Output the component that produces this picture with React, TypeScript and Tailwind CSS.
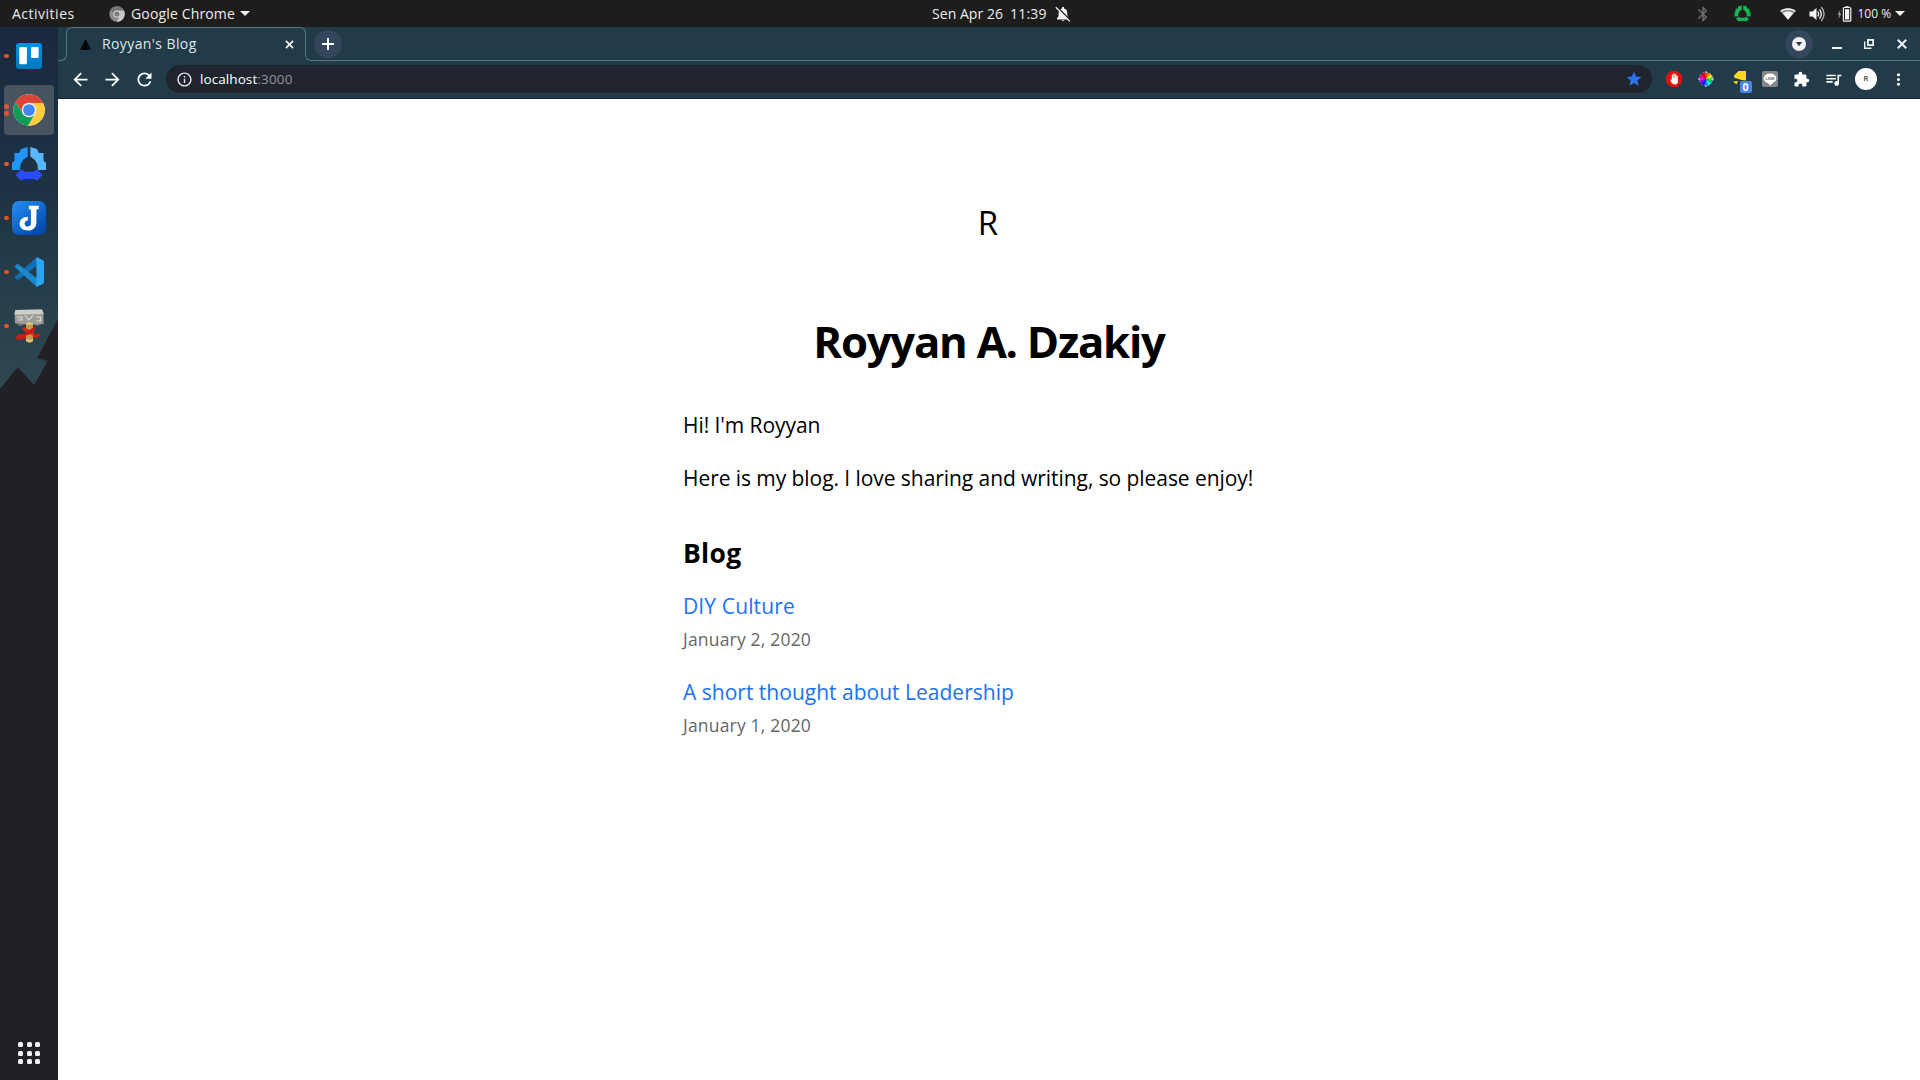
import React from "react";
import {
  MdArrowBack,
  MdArrowForward,
  MdBluetooth,
  MdExtension,
  MdInfoOutline,
  MdMoreVert,
  MdQueueMusic,
  MdRefresh,
  MdStar,
} from "react-icons/md";

function Caret() {
  return (
    <svg viewBox="0 0 10 5" className="h-[5px] w-[10px] shrink-0">
      <path d="M0 0h10L5 5z" fill="#f2f2f2" />
    </svg>
  );
}

function ChromeMono() {
  return (
    <svg viewBox="0 0 16 16" className="size-4 shrink-0">
      <circle cx="8" cy="8" r="7.7" fill="#8d8d8d" />
      <path d="M8 4.4h6.8A7.7 7.7 0 0 1 7.6 15.7L11.2 9.8A3.6 3.6 0 0 0 8 4.4z" fill="#c9c9c9" />
      <path d="M1.3 4.2A7.7 7.7 0 0 1 14.8 4.4H8A3.6 3.6 0 0 0 4.6 7z" fill="#767676" />
      <circle cx="8" cy="8" r="3.6" fill="#dedede" />
      <circle cx="8" cy="8" r="2.6" fill="#7c7c7c" />
    </svg>
  );
}

function TopBar() {
  return (
    <header className="flex h-[27px] shrink-0 items-center bg-[#1d1d1d] text-[14px] leading-[27px] text-[#ececec]">
      <div className="flex w-[932px] items-center pl-3">
        <span className="w-[97px] tracking-[0.5px]">Activities</span>
        <ChromeMono />
        <span className="ml-[6px] w-[109px] tracking-[0.15px]">Google Chrome</span>
        <Caret />
      </div>
      <div className="flex items-center">
        <span className="w-[78px] whitespace-nowrap tracking-[0.05px]">Sen Apr 26</span>
        <span className="w-[45px] tracking-[0.2px]">11:39</span>
        <svg viewBox="0 0 16 16" className="size-4">
          <path d="M2 13.500v-1.300c1.500-1 1.700-2.700 1.700-5C3.700 4.500 5 2.800 7 2.500V1.200q1-.8 2 0v1.300c2 .3 3.300 2 3.300 4.700 0 2.300.2 4 1.700 5v1.300z" fill="#f2f2f2" />
          <path d="M6.500 14.200h3q-1.500 2-3 0z" fill="#f2f2f2" />
          <path d="M1.600.4L15.600 14.600" stroke="#1d1d1d" strokeWidth="1.500" />
          <path d="M.8 1.200L14.800 15.400" stroke="#f2f2f2" strokeWidth="1.300" />
        </svg>
      </div>
      <div className="ml-auto flex items-center pr-[15px]">
        <MdBluetooth className="mr-[22px] size-[18px] text-[#6c6c6c]" />
        <svg viewBox="0 0 34 34" className="mr-[29px] size-[17px]">
          <path d="M15.500 1v8.500L11 13l-2.500 4.500V23H1v-7l2-3.500V8l4-1 2.500-5z M18.500 1v8.500L23 13l2.500 4.500V23H33v-7l-2-3.500V8l-4-1-2.500-5z M9.500 23.500l3 2h9l3-2 5.500 4-5 5.500-3-1h-10l-3 1-5-5.500z" fill="#12b455" />
        </svg>
        <svg viewBox="0 0 16 12" className="mr-[13px] h-3 w-4">
          <path d="M.2 3C4.500-.8 11.500-.8 15.800 3L8 11.800z" fill="#8c8c8c" />
          <path d="M.2 3C4.500-.8 11.500-.8 15.800 3l-.9 1C11 1 5 1 1.100 4z" fill="#f2f2f2" />
          <path d="M2.800 5.300C6 3 10 3 13.200 5.300L8 11.800z" fill="#f2f2f2" />
        </svg>
        <svg viewBox="0 0 17 16" className="mr-[11px] h-4 w-[17px]" fill="none" stroke="#f2f2f2" strokeWidth="1.300" strokeLinecap="round">
          <path d="M.5 5.500h3L7.500 2v12l-4-3.500h-3z" fill="#f2f2f2" stroke="none" />
          <path d="M9 6q1.500 2 0 4M10.800 3.800q3 4.200 0 8.400" />
          <path d="M12.600 1.500q5 6.500 0 13" stroke="#b5b5b5" />
        </svg>
        <svg viewBox="0 0 15 16" className="mr-[5.500px] h-4 w-[15px]">
          <path d="M3.500 3.500L.5 8.800h1.700L1.500 13l3-5.400H2.800z" fill="#9c9c9c" />
          <path d="M8.300 1V.2h3.400V1z" fill="#f2f2f2" />
          <rect x="6.400" y="1.500" width="7.400" height="13.700" rx="1" fill="none" stroke="#f2f2f2" strokeWidth="1.200" />
          <rect x="8" y="3.200" width="4.200" height="10.300" fill="#f2f2f2" />
        </svg>
        <span className="mr-[5.500px] w-[32px] whitespace-nowrap text-[12px]">100 %</span>
        <Caret />
      </div>
    </header>
  );
}

const dockIcons: { dots: number; active?: boolean; icon: React.ReactNode }[] = [
  {
    dots: 1,
    icon: (
      <svg viewBox="0 0 26 26" className="size-[26px]">
        <defs>
          <linearGradient id="trello" x2="0" y2="1">
            <stop stopColor="#0091e6" />
            <stop offset="1" stopColor="#0079bf" />
          </linearGradient>
        </defs>
        <rect width="26" height="26" rx="3" fill="url(#trello)" />
        <rect x="3.300" y="4" width="7.600" height="17.200" rx="1.200" fill="#fff" />
        <rect x="15" y="4" width="7.600" height="11" rx="1.200" fill="#fff" />
      </svg>
    ),
  },
  {
    dots: 2,
    active: true,
    icon: (
      <svg viewBox="0 0 48 48" className="size-8">
        <circle cx="24" cy="24" r="23.500" fill="#fff" />
        <path d="M24 13.500h21.200A23.600 23.600 0 0 0 3.600 12.200L14.900 29.200z" fill="#db4437" />
        <path d="M33.100 29.200L22.500 47.600A23.600 23.600 0 0 0 45.200 13.500H24z" fill="#ffcd40" />
        <path d="M14.900 29.200L3.600 12.200A23.600 23.600 0 0 0 22.500 47.600L33.100 29.200z" fill="#0f9d58" />
        <circle cx="24" cy="24" r="11" fill="#f1f1f1" />
        <circle cx="24" cy="24" r="8.800" fill="#4285f4" />
      </svg>
    ),
  },
  {
    dots: 1,
    icon: (
      <svg viewBox="0 0 34 34" className="size-[34px]">
        <path d="M15.700 0v9.500L11 13l-2.500 4.500L8 23H0v-7l2.500-2.500V6H7l2-4z" fill="#2196fb" />
        <path d="M18.300 0v9.500L23 13l2.500 4.500L26 23h8v-7l-2.500-2.500V6H27l-2-4z" fill="#58b7fb" />
        <path d="M9 22.300l4 2.500h8l4-2.500 5.500 5.800-5.500 5.700L22 32H12l-3 1.800-5.500-5.700z" fill="#2b4df5" />
      </svg>
    ),
  },
  {
    dots: 1,
    icon: (
      <svg viewBox="0 0 34 34" className="size-[34px]">
        <defs>
          <linearGradient id="joplin" x2=".7" y2="1">
            <stop stopColor="#2490f5" />
            <stop offset="1" stopColor="#0449ad" />
          </linearGradient>
        </defs>
        <rect width="34" height="34" rx="7" fill="url(#joplin)" />
        <path
          d="M16.800 4.700h10v3.600h-1.700q-.7 0-.7.900v12c0 5.200-3.300 8.300-8.300 8.300-5 0-8.500-2.500-8.500-6.700 0-4.100 3.300-7 8.200-7v3.600c-2 .2-3.200 1.300-3.200 3 0 1.900 1.200 3.200 3.200 3.200s3.100-1.300 3.100-3.600V9.200q0-.9-.8-.9h-1.300z"
          fill="#fff"
        />
      </svg>
    ),
  },
  {
    dots: 1,
    icon: (
      <svg viewBox="0 0 100 100" className="size-[30px]">
        <path d="M96 10L75.500 1 4 65c-2 2-2 4 0 6l5.500 5q2.500 2 5 0L96 14z" fill="#0f6fb3" />
        <path d="M96 90L75.500 99 4 35c-2-2-2-4 0-6l5.500-5q2.500-2 5 0L96 86z" fill="#1b87cd" />
        <path d="M75.500 99q-3 1-5.500-1.500c2 2 5 .6 5-2.300V4.800c0-2.900-3-4.300-5-2.300Q72.500 0 75.500 1L96 11q4 2 4 6v66q0 4-4 6z" fill="#2ba5f2" />
      </svg>
    ),
  },
  {
    dots: 1,
    icon: (
      <svg viewBox="0 0 30 34" className="h-[34px] w-[30px]">
        <path d="M1.500 1l26.500-.500 1.500 3V15l-6 1.500-4-1-4 1-6-1-3 1.500L1 14.500.500 4z" fill="#9b9b98" />
        <path d="M1.500 1l26.500-.500 1.500 4.500-29 .500z" fill="#cfcfca" />
        <path d="M3 8h5v3H4m7-5l4 5 4-5m3 2h4.500v4h-4" fill="none" stroke="#dededb" strokeWidth="1.100" />
        <path d="M1 14.500l7 1.500 7-1 8 1.500 6-1.500" fill="none" stroke="#555" strokeWidth="1" />
        <path d="M2 27q4-3 9-2l4-1 6 1 5-.500-.500 3.500-6 1-4-1-5 2-8.500 1q1.500-2 0-4z" fill="#c91d12" />
        <path d="M12 14.500q3.500-3 7 0v17q-3.500 4-7 0z" fill="#c4964f" />
        <path d="M12 14.500q3.500-3 7 0v1.500h-7zM12 29.500q3.500 2 7 0v2.500q-3.500 3-7 0z" fill="#e0bd78" />
        <path d="M8 19q3-1.500 6 1l5 3.500q2 1.500 0 3-4-.500-7-3.500-3-1.500-4-4z" fill="#dc2a1a" />
        <path d="M22 18q-2-1-5 2l-6 4q-1 1.500 0 2.500 4-.500 7-3 3-2 4-5.500z" fill="#c41a10" />
      </svg>
    ),
  },
];

function Dock() {
  return (
    <nav className="relative flex w-[58px] shrink-0 flex-col bg-[#221f26]">
      <svg viewBox="0 0 58 370" className="absolute left-0 top-0 h-[370px] w-[58px]">
        <defs>
          <linearGradient id="sky" x2="0" y2="1">
            <stop stopColor="#1a293e" />
            <stop offset=".45" stopColor="#1d3345" />
            <stop offset="1" stopColor="#2f4850" />
          </linearGradient>
        </defs>
        <path d="M0 0H58V292L52 303L37 331L47.700 334L34 358L17.700 340L0 362z" fill="url(#sky)" />
      </svg>
      <ul className="relative flex flex-col pt-[2px]">
        {dockIcons.map((item, i) => (
          <li key={i} className="flex h-[54px] items-center">
            <div
              className={
                "relative ml-1 flex size-[50px] items-center justify-center rounded-[4px] " +
                (item.active ? "bg-[#475460]" : "")
              }
            >
              {item.icon}
              <span className="absolute left-0 top-0 flex h-full flex-col justify-center gap-[2px]">
                <i className="block size-[4.600px] rounded-full bg-[#e95420]" />
                {item.dots === 2 && <i className="block size-[4.600px] rounded-full bg-[#e95420]" />}
              </span>
            </div>
          </li>
        ))}
      </ul>
      <div className="relative mb-[16px] ml-[18px] mt-auto grid w-[22px] grid-cols-3 gap-[3.500px]">
        {Array.from({ length: 9 }, (_, i) => (
          <i key={i} className="block size-[5px] rounded-[1.500px] bg-[#f2f2f2]" />
        ))}
      </div>
    </nav>
  );
}

function TabStrip() {
  return (
    <div className="flex h-[34px] shrink-0">
      <div className="h-[17px] w-[9px] self-end rounded-br-[6px] border-b border-r border-[#557885]" />
      <div className="relative flex w-[238px] items-center">
        <span className="absolute -left-px -right-px top-0 h-[17px] rounded-t-[6px] border-x border-t border-[#557885]" />
        <svg viewBox="0 0 12 11" className="ml-[13px] h-[11px] w-3">
          <defs>
            <linearGradient id="favicon">
              <stop offset=".55" stopColor="#050505" />
              <stop offset="1" stopColor="#050505" stopOpacity=".3" />
            </linearGradient>
          </defs>
          <path d="M5.500 0L12 11H0z" fill="url(#favicon)" />
        </svg>
        <span className="ml-[10px] text-[14px] leading-[34px] tracking-[0.400px] text-[#dfe5e8]">Royyan's Blog</span>
        <svg viewBox="0 0 10 10" className="ml-auto mr-[11px] size-[9px]">
          <path d="M1 1l8 8M9 1l-8 8" stroke="#f0f3f4" strokeWidth="1.900" />
        </svg>
      </div>
      <div className="relative flex flex-1 items-center">
        <span className="absolute bottom-0 left-0 right-0 h-[17px] rounded-bl-[6px] border-b border-l border-[#557885]" />
        <div className="relative ml-[9px] flex size-7 items-center justify-center rounded-full bg-[#34465c]">
          <svg viewBox="0 0 12 12" className="size-3">
            <path d="M6 0v12M0 6h12" stroke="#fff" strokeWidth="2" />
          </svg>
        </div>
        <div className="relative ml-auto flex items-center pr-[13px]">
          <div className="flex size-7 items-center justify-center rounded-full bg-[#34465c]">
            <svg viewBox="0 0 14 14" className="size-[14px]">
              <circle cx="7" cy="7" r="7" fill="#f2f4f5" />
              <path d="M3.800 5h6.400L7 9.300z" fill="#2c3e52" />
            </svg>
          </div>
          <span className="ml-[19px] mt-2 h-[2px] w-[10px] bg-[#eef1f2]" />
          <svg viewBox="0 0 10 10" className="ml-[22px] size-[10px]" fill="none" stroke="#eef1f2">
            <rect x="3.900" y=".9" width="5.200" height="5.200" strokeWidth="1.800" />
            <path d="M.7 2.500v6.800h6.800" strokeWidth="1.400" />
          </svg>
          <svg viewBox="0 0 10 10" className="ml-[23px] size-[10px]">
            <path d="M.8.8l8.400 8.400M9.200.8L.8 9.200" stroke="#eef1f2" strokeWidth="2" />
          </svg>
        </div>
      </div>
    </div>
  );
}

const wheel = ["#f33", "#f80", "#ff0", "#3f3", "#0c6", "#0ff", "#08f", "#11f", "#80f", "#f0f", "#f08", "#d00"];

function ColorWheel() {
  return (
    <svg viewBox="-8 -8 16 16" className="size-4">
      <circle r="6.800" fill="none" stroke="#b9bfc2" strokeWidth=".8" strokeDasharray="2 1.500" />
      {wheel.map((c, i) => (
        <path key={c} d="M0 0L-1.800-6.600H1.800z" fill={c} transform={`rotate(${i * 30})`} />
      ))}
      <path d="M0-8l1.500 1.500h-3zM0 8l1.500-1.500h-3zM-8 0l1.500 1.500v-3zM8 0L6.500 1.500v-3z" fill="#d5d9db" />
    </svg>
  );
}

function Toolbar() {
  return (
    <div className="flex h-[38px] shrink-0 items-center border-b border-[#14262f] pb-px pl-[11.500px] text-white">
      <MdArrowBack className="size-[21px]" />
      <MdArrowForward className="ml-[11px] size-[21px]" />
      <MdRefresh className="ml-[11px] size-[21px]" />
      <div className="ml-[11.500px] flex h-7 w-[1486px] items-center rounded-full bg-[#20252d] pl-[9.500px] pr-[9px]">
        <MdInfoOutline className="size-[17px] text-[#e8eaed]" />
        <span className="ml-[7.500px] text-[13.500px] leading-7 tracking-[0.080px]">
          localhost<span className="text-[#8f959b] tracking-[0.200px]">:3000</span>
        </span>
        <MdStar className="ml-auto size-[18px] text-[#2a73e8]" />
      </div>
      <div className="ml-[13.500px] flex items-center">
        <svg viewBox="0 0 16 16" className="size-4">
          <path d="M4.700 0h6.600L16 4.700v6.600L11.300 16H4.700L0 11.300V4.700z" fill="#e3110a" />
          <path
            d="M4 8.600l1.300-.2.500 1V3.800q.7-.8 1.200 0V7h.4V2.800q.7-.9 1.300 0V7h.4V3.400q.7-.8 1.300 0V7.400h.3V5q.7-.7 1.200 0v5q0 3.500-3 3.500-2.200 0-3.300-1.700z"
            fill="#fff"
          />
        </svg>
        <div className="ml-4">
          <ColorWheel />
        </div>
        <div className="relative ml-[19px] h-4 w-[13px]">
          <svg viewBox="0 0 13 14" className="block h-[14px] w-[13px]">
            <path d="M1 4.500L5.500 0H13v9.500L8.500 9 1 6.500z" fill="#fcd91c" />
            <path d="M0 10.500l5-.500-1.500 3.500z" fill="#fcd91c" />
          </svg>
          <span className="absolute left-[7px] top-[10px] flex h-3 w-3 items-center justify-center rounded-[2px] bg-[#4a85ee] text-[10.500px] font-bold leading-3 text-white">
            0
          </span>
        </div>
        <div className="ml-4 flex size-4 items-center justify-center rounded-[2px] bg-[#868686]">
          <svg viewBox="0 0 14 14" className="size-[14px]">
            <ellipse cx="7" cy="6.500" rx="6.300" ry="5" fill="#fff" />
            <path d="M5 11h5l-3 2.500z" fill="#fff" />
            <text x="7" y="8.100" textAnchor="middle" fontSize="4" fontWeight="700" fill="#6d6d6d" fontFamily="Liberation Sans, sans-serif">
              LINE
            </text>
          </svg>
        </div>
        <MdExtension className="ml-[15.500px] size-[17px]" />
        <MdQueueMusic className="ml-[14px] size-[19px]" />
        <span className="ml-3 flex size-[22px] items-center justify-center rounded-full bg-white text-[7.500px] font-semibold leading-none text-[#333]">
          R
        </span>
        <MdMoreVert className="ml-[12px] size-[19px]" />
      </div>
    </div>
  );
}

const posts = [
  { title: "DIY Culture", date: "January 2, 2020", tracking: "tracking-[0.130px]" },
  { title: "A short thought about Leadership", date: "January 1, 2020", tracking: "tracking-[0.010px]" },
];

function BlogPage() {
  return (
    <main className="flex flex-1 justify-center bg-white text-[21px] leading-8 text-black">
      <div className="w-[612px] pt-[104px]">
        <p className="pr-0.5 text-center font-['Open_Sans'] text-[33px] font-normal leading-10">R</p>
        <h1 className="mt-[71px] whitespace-nowrap text-center text-[43.700px] font-bold leading-[54px] tracking-[-1.250px]">
          Royyan A. Dzakiy
        </h1>
        <p className="mt-[41px] tracking-[-0.070px]">Hi! I'm Royyan</p>
        <p className="mt-[21px] tracking-[-0.065px]">Here is my blog. I love sharing and writing, so please enjoy!</p>
        <h2 className="mt-[39px] text-[26.500px] font-bold leading-10 tracking-[0.300px]">Blog</h2>
        <ul className="mt-[17px]">
          {posts.map((p) => (
            <li key={p.title} className="mb-[23px]">
              <a className={"block text-[#1a73f5] " + p.tracking}>{p.title}</a>
              <small className="mt-1 block text-[17.500px] leading-[27px] tracking-[0.190px] text-[#666]">{p.date}</small>
            </li>
          ))}
        </ul>
      </div>
    </main>
  );
}

export default function App() {
  return (
    <div className="flex h-[1080px] w-[1920px] flex-col overflow-hidden bg-[#1d1d1d] font-['Open_Sans','Noto_Sans',sans-serif]">
      <TopBar />
      <div className="flex flex-1">
        <Dock />
        <div className="flex flex-1 flex-col bg-[#213b49]">
          <TabStrip />
          <Toolbar />
          <BlogPage />
        </div>
      </div>
    </div>
  );
}
